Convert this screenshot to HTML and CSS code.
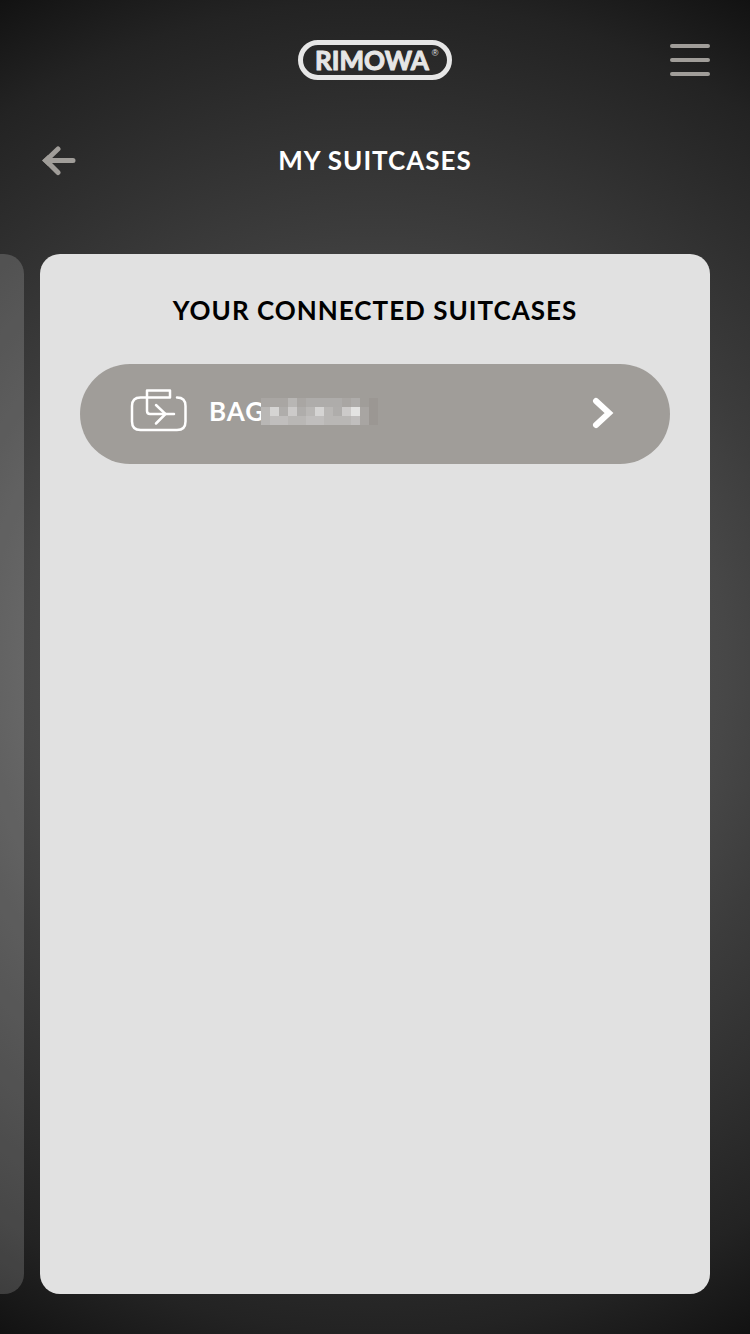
FILE: index.html
```html
<!DOCTYPE html>
<html lang="en">
<head>
    <meta charset="UTF-8">
    <meta name="viewport" content="width=device-width, initial-scale=1.0">
    <title>My Suitcases</title>
    <link rel="stylesheet" href="styles.css">
</head>
<body>
    <header class="top-bar">
        <a class="logo" href="/" aria-label="RIMOWA">
            <svg width="154" height="40" viewBox="0 0 154 40">
                <rect x="2.5" y="2.5" width="149" height="35" rx="17.5" fill="none" stroke="currentColor" stroke-width="5"/>
                <text class="logo-name" x="74" y="30" text-anchor="middle">RIMOWA</text>
                <text class="logo-mark" x="137" y="16" text-anchor="middle">®</text>
            </svg>
        </a>
        <button class="menu-btn" type="button" aria-label="Menu">
            <span></span>
            <span></span>
            <span></span>
        </button>
    </header>

    <div class="title-bar">
        <button class="back-btn" type="button" aria-label="Back">
            <svg width="36" height="32" viewBox="0 0 36 32">
                <path d="M18 5 L6 16.5 L18 28.500 M7 16.5 H33" fill="none" stroke="currentColor" stroke-width="5" stroke-linecap="round"/>
                <path d="M2 16.5 L8 11 V22 Z" fill="currentColor"/>
            </svg>
        </button>
        <h1>MY SUITCASES</h1>
    </div>

    <main class="slides">
        <div class="prev-slide"></div>
        <section class="card">
            <h2>YOUR CONNECTED SUITCASES</h2>
            <a class="suitcase" href="#bag">
                <svg class="bag-icon" width="57" height="44" viewBox="0 0 57 44">
                    <path d="M47 8.500 Q55.500 8.500 55.500 17 V32.500 Q55.500 41 47 41 H10.500 Q2 41 2 32.500 V17 Q2 8.500 10.500 8.500 H40 V1.500 H17 V22 Q17 25 20 25 H44" fill="none" stroke="currentColor" stroke-width="2.500" stroke-linecap="round" stroke-linejoin="round"/>
                    <path d="M26 16 L35.500 25 L26 34.500" fill="none" stroke="currentColor" stroke-width="2.500" stroke-linecap="round"/>
                </svg>
                <span class="bag-name">BAG</span>
                <!-- masked serial number -->
                <svg class="mask" width="117" height="27" viewBox="0 0 13 3" preserveAspectRatio="none" shape-rendering="crispEdges">
                    <path fill="#b9b7b5" d="M0 1h11v2h-11z"/>
                    <path fill="#a9a6a3" d="M0 0h11v1h-11z"/>
                    <path fill="#b8b6b4" d="M3 0h1v1h-1z"/>
                    <path fill="#aeacaa" d="M5 0h4v1h-4zM10 0h1v1h-1z"/>
                    <path fill="#d5d4d3" d="M1 1h1v1h-1zM6 1h1v1h-1z"/>
                    <path fill="#cccac9" d="M3 1h1v1h-1zM9 1h1v1h-1z"/>
                    <path fill="#e3e3e2" d="M10 1h1v1h-1z"/>
                    <path fill="#afadab" d="M2 1h1v1h-1zM4 1h1v1h-1zM8 1h1v1h-1z"/>
                    <path fill="#c0bebd" d="M1 2h2v1h-2zM5 2h2v1h-2zM10 2h1v1h-1z"/>
                    <path fill="#a8a5a2" d="M11 1h1v2h-1z"/>
                    <path fill="#9b9793" d="M12 0h1v3h-1z"/>
                </svg>
                <svg class="chevron" width="22" height="36" viewBox="0 0 22 36">
                    <path d="M4 8 L17 20 L4 32" fill="none" stroke="currentColor" stroke-width="6" stroke-linecap="round"/>
                </svg>
            </a>
        </section>
    </main>
</body>
</html>
```
FILE: styles.css
```css
:root {
    --metal: #a09d99;
    --silver: #e1e1e1;
    --side: 40px;
}

* {
    box-sizing: border-box;
}

body {
    margin: 0;
    min-height: 100vh;
    display: flex;
    flex-direction: column;
    font-family: Lato, 'Liberation Sans', sans-serif;
    color: white;
    background: radial-gradient(circle farthest-corner at center, #686868 0%, #474747 46%, #3c3c3c 57%, #232323 87%, #121212 100%);
}

button {
    border: none;
    padding: 0;
    background: none;
    color: var(--metal);
    cursor: pointer;
}

svg {
    display: block;
}

/* Logo and menu */
.top-bar {
    display: grid;
    grid-template-columns: 1fr auto 1fr;
    align-items: center;
    padding: 40px var(--side) 0;
}

.logo {
    grid-column: 2;
    color: #e6e6e6;
}

.logo-name {
    font-size: 26px;
    font-weight: bold;
    fill: currentColor;
    stroke: currentColor;
    stroke-width: 1px;
    stroke-linejoin: round;
}

.logo-mark {
    font-family: 'Liberation Sans', sans-serif;
    font-size: 9px;
    fill: currentColor;
}

.menu-btn {
    justify-self: end;
    width: 40px;
    display: flex;
    flex-direction: column;
    gap: 10px;
}

.menu-btn span {
    height: 4px;
    border-radius: 2px;
    background: var(--metal);
}

/* Page title */
.title-bar {
    display: grid;
    grid-template-columns: 1fr auto 1fr;
    align-items: center;
    height: 80px;
    margin: 40px 0 54px;
    padding: 0 var(--side);
}

.back-btn {
    justify-self: start;
}

h1,
h2 {
    margin: 0;
    font-size: 26px;
    line-height: 32px;
    font-weight: bold;
    letter-spacing: 1px;
    text-align: center;
}

/* Slides */
.slides {
    flex: 1;
    display: flex;
    gap: 16px;
    padding: 0 var(--side) 40px 0;
}

.prev-slide {
    width: 24px;
    border-radius: 0 20px 20px 0;
    background: rgba(255, 255, 255, 0.17);
}

.card {
    flex: 1;
    padding: 40px;
    border-radius: 20px;
    background: var(--silver);
    color: black;
}

.suitcase {
    display: flex;
    align-items: center;
    height: 100px;
    margin-top: 38px;
    padding: 0 56px 6px 50px;
    border-radius: 50px;
    background: var(--metal);
    color: white;
    text-decoration: none;
}

.bag-name {
    margin-left: 22px;
    font-size: 26px;
    line-height: 32px;
    font-weight: bold;
    letter-spacing: 1px;
}

/* The mask covers the edge of the last letter */
.mask {
    margin-left: -4px;
}

.chevron {
    margin-left: auto;
}
```
